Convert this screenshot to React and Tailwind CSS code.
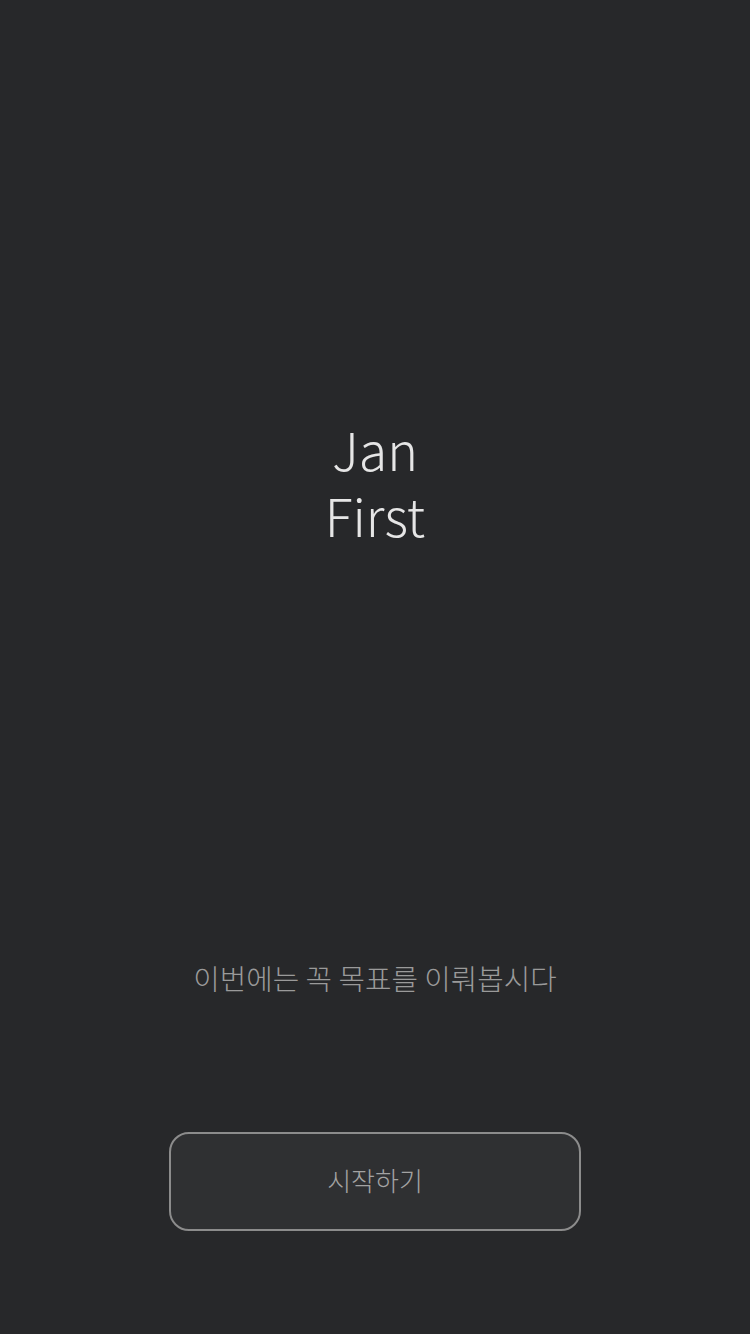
import React from 'react';

// 시작 화면
export default function App() {
  return (
    <div className="flex h-[1334px] w-[750px] flex-col items-center bg-[#27282a] font-['Noto_Sans_CJK_KR',sans-serif]">
      <div className="mt-[416px] flex flex-col items-center text-[52px] font-light leading-[66px] text-[#e6e6e6]">
        <div>Jan</div>
        <div>First</div>
      </div>

      <div className="mt-[408px] text-[28.8px] font-light text-[#9a9a9a]">
        이번에는 꼭 목표를 이뤄봅시다
      </div>

      <button className="mt-[133px] flex h-[99px] w-[412px] items-center justify-center rounded-[20px] border-2 border-[#8c8c8c] bg-[#2f3032] pb-[4px] text-[26px] font-light text-[#a3a3a3]">
        시작하기
      </button>
    </div>
  );
}
